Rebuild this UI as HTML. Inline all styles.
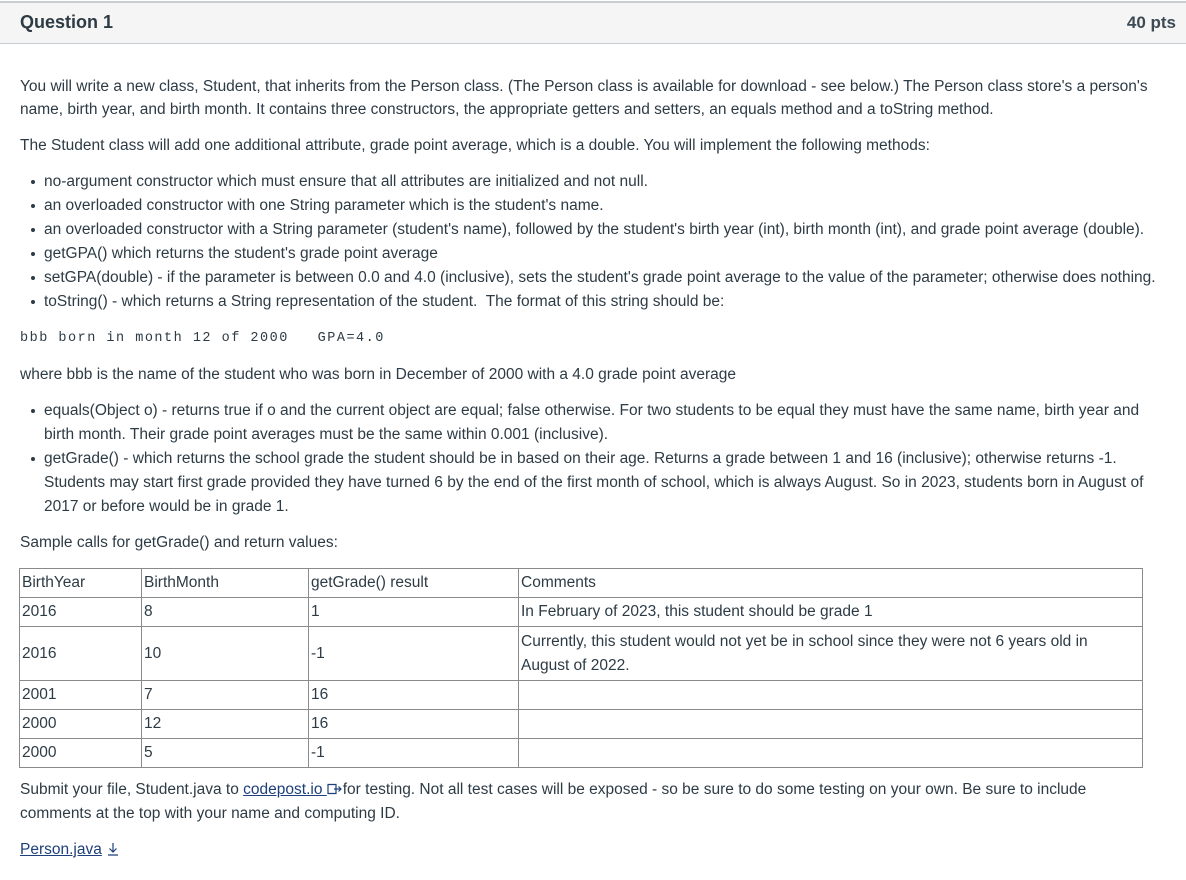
<!DOCTYPE html>
<html><head><meta charset="utf-8"><style>
body{margin:0;width:1186px;height:880px;background:#fff;position:relative;overflow:hidden;font-family:"Liberation Sans",sans-serif;color:#2d3b45;font-size:15.5px}
.hd{position:absolute;left:0;top:1px;width:1186px;height:43px;background:#f5f5f5;border-top:2px solid #c7cdd1;border-bottom:1px solid #c7cdd1;box-sizing:border-box}
.hd .t{position:absolute;left:20px;top:9px;font-size:18px;font-weight:bold}
.hd .p{position:absolute;right:10px;top:10px;font-size:17px;font-weight:bold;color:#3d4a55}
.l{position:absolute;white-space:nowrap;line-height:24px;height:24px}
.b::before{content:"";position:absolute;left:-13px;top:10px;width:4px;height:4px;border-radius:50%;background:#2d3b45}
.c{font-family:"Liberation Mono",monospace;font-size:13.5px;letter-spacing:1.5px;white-space:pre}
table{position:absolute;left:19px;top:568px;border-collapse:collapse;width:1124px;table-layout:fixed}
td{border:1px solid #8a8a8a;padding:0 2px;height:28px;line-height:24px;vertical-align:middle;font-size:15.5px;white-space:nowrap;overflow:hidden}
a{color:#1d3f7a;text-decoration:underline}
</style></head><body>
<div class="hd"><div class="t">Question 1</div><div class="p">40 pts</div></div>
<div class="l" style="left:20px;top:75px">You will write a new class, Student, that inherits from the Person class. (The Person class is available for download - see below.) The Person class store's a person's</div>
<div class="l" style="left:20px;top:98px">name, birth year, and birth month. It contains three constructors, the appropriate getters and setters, an equals method and a toString method.</div>
<div class="l" style="left:20px;top:134px">The Student class will add one additional attribute, grade point average, which is a double. You will implement the following methods:</div>
<div class="l b" style="left:44px;top:170px">no-argument constructor which must ensure that all attributes are initialized and not null.</div>
<div class="l b" style="left:44px;top:194px">an overloaded constructor with one String parameter which is the student's name.</div>
<div class="l b" style="left:44px;top:218px">an overloaded constructor with a String parameter (student's name), followed by the student's birth year (int), birth month (int), and grade point average (double).</div>
<div class="l b" style="left:44px;top:242px">getGPA() which returns the student's grade point average</div>
<div class="l b" style="left:44px;top:266px">setGPA(double) - if the parameter is between 0.0 and 4.0 (inclusive), sets the student's grade point average to the value of the parameter; otherwise does nothing.</div>
<div class="l b" style="left:44px;top:290px">toString() - which returns a String representation of the student.&nbsp; The format of this string should be:</div>
<div class="l c" style="left:20px;top:327px">bbb born in month 12 of 2000   GPA=4.0</div>
<div class="l" style="left:20px;top:363px">where bbb is the name of the student who was born in December of 2000 with a 4.0 grade point average</div>
<div class="l b" style="left:44px;top:399px">equals(Object o) - returns true if o and the current object are equal; false otherwise. For two students to be equal they must have the same name, birth year and</div>
<div class="l" style="left:44px;top:423px">birth month. Their grade point averages must be the same within 0.001 (inclusive).</div>
<div class="l b" style="left:44px;top:447px">getGrade() - which returns the school grade the student should be in based on their age. Returns a grade between 1 and 16 (inclusive); otherwise returns -1.</div>
<div class="l" style="left:44px;top:471px">Students may start first grade provided they have turned 6 by the end of the first month of school, which is always August. So in 2023, students born in August of</div>
<div class="l" style="left:44px;top:495px">2017 or before would be in grade 1.</div>
<div class="l" style="left:20px;top:531px">Sample calls for getGrade() and return values:</div>
<table>
<colgroup><col style="width:122px"><col style="width:167px"><col style="width:210px"><col></colgroup>
<tr><td>BirthYear</td><td>BirthMonth</td><td>getGrade() result</td><td>Comments</td></tr>
<tr><td>2016</td><td>8</td><td>1</td><td>In February of 2023, this student should be grade 1</td></tr>
<tr><td style="height:53px">2016</td><td>10</td><td>-1</td><td>Currently, this student would not yet be in school since they were not 6 years old in<br>August of 2022.</td></tr>
<tr><td>2001</td><td>7</td><td>16</td><td></td></tr>
<tr><td>2000</td><td>12</td><td>16</td><td></td></tr>
<tr><td>2000</td><td>5</td><td>-1</td><td></td></tr>
</table>
<div class="l" style="left:20px;top:778px">Submit your file, Student.java to <a>codepost.io </a> <svg width="16" height="12" viewBox="0 0 16 12" style="vertical-align:-1px"><path d="M1 1.5h8v9H1z M7 6h7 M11.5 3.5L14 6l-2.5 2.5" fill="none" stroke="#1d3f7a" stroke-width="1.2"/></svg>for testing. Not all test cases will be exposed - so be sure to do some testing on your own. Be sure to include</div>
<div class="l" style="left:20px;top:802px">comments at the top with your name and computing ID.</div>
<div class="l" style="left:20px;top:838px"><a>Person.java</a> <svg width="14" height="14" viewBox="0 0 14 14" style="vertical-align:-2px"><path d="M7 1v9 M3.5 6.5L7 10l3.5-3.5 M2 13h10" fill="none" stroke="#1d3f7a" stroke-width="1.2"/></svg></div>
</body></html>
